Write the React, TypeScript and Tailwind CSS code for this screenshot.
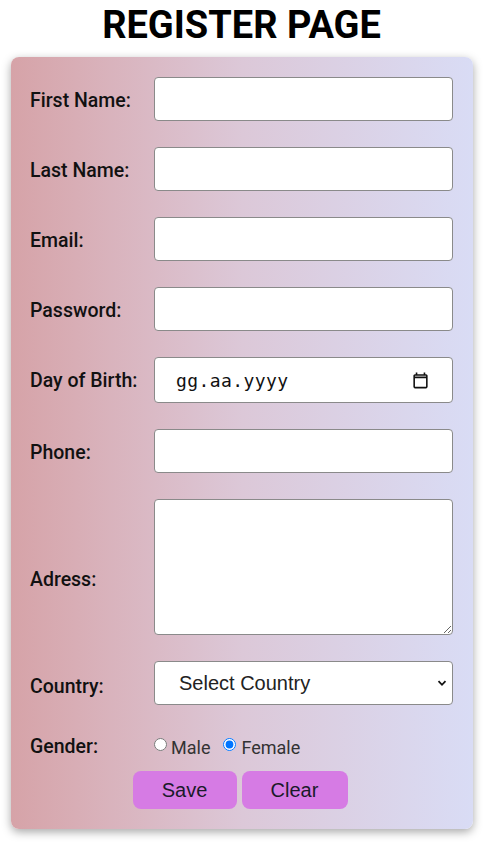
import React from "react";

const font = { fontFamily: "Roboto, 'Liberation Sans', sans-serif" };

function Row({ label, children, h = "h-[44px]", lo = "translate-y-[2px]" }: { label: string; children: React.ReactNode; h?: string; lo?: string }) {
  return (
    <div className={`flex items-center ${h}`}>
      <label className={`w-[124px] shrink-0 text-[19.5px] font-medium text-[#111] ${lo}`}>{label}</label>
      <div className="flex-1 h-full">{children}</div>
    </div>
  );
}

const inputCls = "w-full h-full bg-white border border-[#8a8a8a] rounded-[4px] outline-none px-2";

export default function App() {
  return (
    <div className="w-[483px] min-h-[848px] bg-white" style={font}>
      <h1 className="h-[50px] leading-[50px] text-center text-[38px] font-bold text-black">REGISTER PAGE</h1>
      <div className="ml-[11px] mt-[7px] w-[462px] rounded-[8px] bg-gradient-to-r from-[#d6a3a8] via-[#dcc8d8] to-[#d9dcf5] shadow-[0_3px_10px_rgba(0,0,0,0.35)] pl-[19px] pr-[20px] pt-[20px] pb-[20px]">
        <div className="flex flex-col gap-[26px]">
          <Row label="First Name:"><input className={inputCls} /></Row>
          <Row label="Last Name:"><input className={inputCls} /></Row>
          <Row label="Email:"><input className={inputCls} /></Row>
          <Row label="Password:"><input type="password" className={inputCls} /></Row>
          <Row label="Day of Birth:" h="h-[46px]" lo="translate-y-[1px]">
            <div className="w-full h-full bg-white border border-[#8a8a8a] rounded-[4px] flex items-center pl-[21px] pr-[22px]">
              <span className="text-[18px] text-[#111] tracking-[0.4px]" style={{ fontFamily: "'DejaVu Sans Mono', 'Liberation Mono', monospace" }}>gg.aa.yyyy</span>
              <svg className="ml-auto" width="19" height="19" viewBox="0 0 24 24" fill="none">
                <path d="M19 4h-1V2h-2v2H8V2H6v2H5c-1.1 0-2 .9-2 2v14c0 1.1.9 2 2 2h14c1.1 0 2-.9 2-2V6c0-1.1-.9-2-2-2zm0 16H5V9h14v11zM5 7V6h14v1H5z" fill="#111" />
              </svg>
            </div>
          </Row>
          <Row label="Phone:"><input className={inputCls} /></Row>
          <Row label="Adress:" h="h-[136px]" lo="translate-y-[13px]"><textarea className={`${inputCls} resize block`} /></Row>
          <Row label="Country:" lo="translate-y-[4px]">
            <div className="relative w-full h-full">
              <select className="appearance-none w-full h-full bg-white border border-[#8a8a8a] rounded-[4px] pl-[24px] text-[20px] text-[#222] outline-none" style={{ fontFamily: "'Liberation Sans', Arial, sans-serif" }}>
                <option>Select Country</option>
              </select>
              <svg className="absolute right-[6px] top-1/2 -translate-y-1/2 pointer-events-none" width="10" height="10" viewBox="0 0 10 10">
                <path d="M1.5 3.2 L5 6.8 L8.5 3.2" stroke="#111" strokeWidth="1.8" fill="none" />
              </svg>
            </div>
          </Row>
        </div>
        <div className="flex items-center h-[28px] mt-[28px]">
          <span className="w-[124px] shrink-0 text-[19.5px] font-medium text-[#111]">Gender:</span>
          <label className="flex items-center text-[18px] text-[#333]">
            <input type="radio" name="g" className="m-0 mr-[4px] w-[13px] h-[13px] -translate-y-[3px]" />Male
          </label>
          <label className="flex items-center text-[18px] text-[#333] ml-[13px]">
            <input type="radio" name="g" defaultChecked className="m-0 mr-[5px] w-[13px] h-[13px] -translate-y-[3px]" />Female
          </label>
        </div>
        <div className="flex justify-center gap-[5px] mt-[10px] pr-[3px]">
          <button className="w-[104px] h-[38px] rounded-[8px] bg-[#d67be4] text-[20px] text-[#1a1a2a]" style={{ fontFamily: "'Liberation Sans', Arial, sans-serif" }}>Save</button>
          <button className="w-[106px] h-[38px] rounded-[8px] bg-[#d67be4] text-[20px] text-[#1a1a2a]" style={{ fontFamily: "'Liberation Sans', Arial, sans-serif" }}>Clear</button>
        </div>
      </div>
    </div>
  );
}
